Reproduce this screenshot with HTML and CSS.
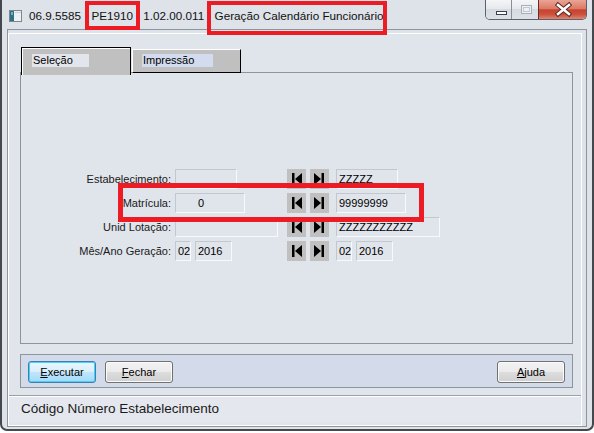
FILE: index.html
```html
<!DOCTYPE html>
<html lang="pt-BR">
<head>
    <meta charset="UTF-8">
    <meta name="viewport" content="width=device-width, initial-scale=1.0">
    <title>Geração Calendário Funcionário</title>
    <link rel="stylesheet" href="styles.css">
</head>
<body>
    <div class="window">
        <div class="titlebar">
            <svg class="app-icon" width="13" height="12" viewBox="0 0 13 12">
                <rect x="0.5" y="0.5" width="12" height="11" fill="#eef1f4" stroke="#7d8790"/>
                <rect x="1" y="1" width="4" height="10" fill="#2e7480"/>
                <rect x="2" y="2" width="2" height="3" fill="#6fb3bd"/>
                <rect x="6" y="2" width="6" height="1" fill="#c9d0d8"/>
            </svg>
            <span class="title">06.9.5585 · PE1910 · 1.02.00.011 · Geração Calendário Funcionário</span>
            <div class="controls">
                <span class="ctl ctl-min">
                    <svg width="26" height="19" viewBox="0 0 26 19"><rect x="10.5" y="11.5" width="10" height="3" fill="#fff" stroke="#37414f"/></svg>
                </span>
                <span class="ctl ctl-max">
                    <svg width="27" height="19" viewBox="0 0 27 19"><rect x="9.5" y="5.5" width="10" height="8" fill="#eef0f3" stroke="#a9afb8"/><rect x="11.5" y="7.5" width="6" height="4" fill="none" stroke="#c3c8cf"/></svg>
                </span>
                <span class="ctl ctl-close">
                    <svg width="46" height="19" viewBox="0 0 46 19"><path d="M19 5 L30 14 M30 5 L19 14" stroke="#5a2a22" stroke-width="4.5" stroke-linecap="square"/><path d="M19 5 L30 14 M30 5 L19 14" stroke="#fff" stroke-width="2.5" stroke-linecap="square"/></svg>
                </span>
            </div>
        </div>

        <div class="client">
            <div class="form">
                <div class="form-body">
                    <div class="tabs">
                        <div class="tab tab-active"><span class="tab-label">Seleção</span></div>
                        <div class="tab"><span class="tab-label tab-label-alt">Impressão</span></div>
                    </div>

                    <div class="tab-panel">
                        <div class="fields">
                            <div class="field-row">
                                <span class="field-label">Estabelecimento:</span>
                                <div class="range-from"><span class="input w-62"></span></div>
                                <span class="nav-btn">
                                    <svg width="19" height="20" viewBox="0 0 19 20"><rect x="5" y="4" width="2.5" height="12"/><polygon points="8,10 15,4 15,16"/></svg>
                                </span>
                                <span class="nav-btn">
                                    <svg width="19" height="20" viewBox="0 0 19 20"><polygon points="4,4 11,10 4,16"/><rect x="11.5" y="4" width="2.5" height="12"/></svg>
                                </span>
                                <div class="range-to"><span class="input w-62">ZZZZZ</span></div>
                            </div>
                            <div class="field-row">
                                <span class="field-label">Matrícula:</span>
                                <div class="range-from"><span class="input input-num w-70">0</span></div>
                                <span class="nav-btn">
                                    <svg width="19" height="20" viewBox="0 0 19 20"><rect x="5" y="4" width="2.5" height="12"/><polygon points="8,10 15,4 15,16"/></svg>
                                </span>
                                <span class="nav-btn">
                                    <svg width="19" height="20" viewBox="0 0 19 20"><polygon points="4,4 11,10 4,16"/><rect x="11.5" y="4" width="2.5" height="12"/></svg>
                                </span>
                                <div class="range-to"><span class="input w-70">99999999</span></div>
                            </div>
                            <div class="field-row">
                                <span class="field-label">Unid Lotação:</span>
                                <div class="range-from"><span class="input w-103"></span></div>
                                <span class="nav-btn">
                                    <svg width="19" height="20" viewBox="0 0 19 20"><rect x="5" y="4" width="2.5" height="12"/><polygon points="8,10 15,4 15,16"/></svg>
                                </span>
                                <span class="nav-btn">
                                    <svg width="19" height="20" viewBox="0 0 19 20"><polygon points="4,4 11,10 4,16"/><rect x="11.5" y="4" width="2.5" height="12"/></svg>
                                </span>
                                <div class="range-to"><span class="input w-104">ZZZZZZZZZZZ</span></div>
                            </div>
                            <div class="field-row">
                                <span class="field-label">Mês/Ano Geração:</span>
                                <div class="range-from">
                                    <span class="input w-16">02</span>
                                    <span class="input w-37">2016</span>
                                </div>
                                <span class="nav-btn">
                                    <svg width="19" height="20" viewBox="0 0 19 20"><rect x="5" y="4" width="2.5" height="12"/><polygon points="8,10 15,4 15,16"/></svg>
                                </span>
                                <span class="nav-btn">
                                    <svg width="19" height="20" viewBox="0 0 19 20"><polygon points="4,4 11,10 4,16"/><rect x="11.5" y="4" width="2.5" height="12"/></svg>
                                </span>
                                <div class="range-to">
                                    <span class="input w-16">02</span>
                                    <span class="input w-37">2016</span>
                                </div>
                            </div>
                        </div>
                    </div>

                    <div class="button-bar">
                        <button class="btn btn-default"><u>E</u>xecutar</button>
                        <button class="btn"><u>F</u>echar</button>
                        <button class="btn btn-right"><u>A</u>juda</button>
                    </div>
                </div>

                <div class="status">
                    <div class="status-text">Código Número Estabelecimento</div>
                </div>
            </div>
        </div>
    </div>

    <!-- highlight marks drawn over the screenshot -->
    <div class="mark mark-code"></div>
    <div class="mark mark-title"></div>
    <div class="mark mark-row"></div>
</body>
</html>
```

FILE: styles.css
```css
/* Base */
* {
    box-sizing: border-box;
}

body {
    margin: 0;
    background: #ffffff;
    font-family: "Liberation Sans", Arial, sans-serif;
    font-size: 11px;
    color: #000000;
}

/* Window frame */
.window {
    width: 594px;
    height: 431px;
    background: #dee2e9;
    border: 2px solid #45484d;
    border-top: 0;
    border-radius: 0 0 7px 7px;
    padding: 0 5px 2px;
    display: flex;
    flex-direction: column;
}

.titlebar {
    height: 29px;
    display: flex;
    align-items: center;
    padding-left: 2px;
}

.app-icon {
    flex-shrink: 0;
    margin-top: 2px;
}

.title {
    margin-left: 7px;
    margin-top: 1px;
    font-size: 11.7px;
    color: #111111;
    white-space: nowrap;
}

.controls {
    margin-left: auto;
    align-self: flex-start;
    display: flex;
    height: 20px;
    border: 1px solid #5d626a;
    border-top: 0;
    border-radius: 0 0 5px 5px;
    overflow: hidden;
}

.ctl {
    display: block;
    height: 19px;
    background: linear-gradient(#f4f5f7, #e6e9ee 45%, #d6dae1 50%, #dde1e7);
}

.ctl-min {
    width: 26px;
    border-right: 1px solid #8a8f97;
}

.ctl-max {
    width: 27px;
    border-right: 1px solid #6a2c22;
}

.ctl-close {
    width: 47px;
    background: linear-gradient(#e9a595, #dc7a66 45%, #c7432e 52%, #cc503b 75%, #df8674);
}

.ctl svg {
    display: block;
}

/* Client area */
.client {
    flex: 1;
    border: 1px solid #8f949b;
    padding: 3px 4px 0 0;
    display: flex;
    flex-direction: column;
}

.form {
    flex: 1;
    border: 1px solid #ffffff;
    background: #e0e4eb;
    display: flex;
    flex-direction: column;
}

.form-body {
    padding: 13px 8px 0 11px;
}

/* Tabs */
.tabs {
    display: flex;
    align-items: flex-start;
    height: 25px;
}

.tab {
    position: relative;
    z-index: 1;
    width: 109px;
    height: 24px;
    margin-top: 2px;
    margin-left: 1px;
    padding: 4px 0 0 9px;
    background: #c0c0c0;
    border-top: 1px solid #ffffff;
    border-left: 1px solid #ffffff;
    border-right: 1px solid #000000;
    border-bottom: 1px solid #000000;
}

.tab-active {
    width: 110px;
    height: 28px;
    margin-top: 0;
    padding: 6px 0 0 10px;
    border-top-color: #000000;
    border-left-color: #000000;
    border-bottom: 0;
    box-shadow: inset 1px 1px 0 #ffffff;
}

.tab-label {
    display: inline-block;
    width: 57px;
    height: 13px;
    line-height: 13px;
    padding-left: 1px;
    background: #e2e5ec;
}

.tab-label-alt {
    width: 71px;
    background: #d3dbee;
}

.tab-panel {
    height: 272px;
    border: 1px solid #8f949b;
}

/* Field rows */
.fields {
    margin-top: 96px;
    display: flex;
    flex-direction: column;
    gap: 4px;
}

.field-row {
    display: flex;
    align-items: center;
    height: 20px;
}

.field-label {
    width: 150px;
    margin-right: 4px;
    text-align: right;
    color: #1a1a1a;
}

.range-from {
    width: 112px;
    display: flex;
    gap: 4px;
}

.range-to {
    margin-left: 7px;
    display: flex;
    gap: 4px;
}

.input {
    display: block;
    height: 20px;
    padding: 0 2px;
    line-height: 18px;
    white-space: nowrap;
    overflow: hidden;
    border: 1px solid;
    border-color: #c3c8d0 #f8f9fb #f8f9fb #c3c8d0;
}

.input-num {
    padding-left: 22px;
}

.w-16 { width: 16px; }
.w-37 { width: 37px; }
.w-62 { width: 62px; }
.w-70 { width: 70px; }
.w-103 { width: 103px; }
.w-104 { width: 104px; }

.nav-btn {
    display: block;
    width: 19px;
    height: 20px;
    background: #c0c0c0;
}

.nav-btn + .nav-btn {
    margin-left: 4px;
}

.nav-btn svg {
    display: block;
    fill: #000000;
}

/* Buttons */
.button-bar {
    margin-top: 10px;
    height: 34px;
    border: 1px solid #8f949b;
    background: #d3dbea;
    display: flex;
    align-items: flex-start;
    gap: 9px;
    padding: 6px 7px 0;
}

.btn {
    width: 68px;
    height: 22px;
    padding: 0;
    border: 1px solid #707070;
    border-radius: 3px;
    background: linear-gradient(#f2f2f2, #ebebeb 48%, #dddddd 52%, #cfcfcf);
    box-shadow: inset 0 0 0 1px #fbfbfb;
    font-family: "Liberation Sans", Arial, sans-serif;
    font-size: 11px;
    color: #000000;
}

.btn-default {
    border-color: #3c7fb1;
    background: linear-gradient(#eaf6fd, #d9f0fc 48%, #bee6fd 52%, #a7d9f5);
    box-shadow: inset 0 0 0 1px #48d0f8;
}

.btn-right {
    margin-left: auto;
}

/* Status bar */
.status {
    flex: 1;
    margin-top: 7px;
    border-top: 1px solid #9ca1a8;
    padding: 0 1px 3px 0;
}

.status-text {
    height: 26px;
    border-top: 1px solid #ffffff;
    background: #e4e7ed;
    padding-left: 12px;
    line-height: 24px;
    font-size: 13.5px;
    color: #1a1a1a;
}

/* Red highlight marks */
.mark {
    position: absolute;
    border: 4px solid #ed1c24;
}

.mark-code {
    left: 85px;
    top: 1px;
    width: 55px;
    height: 29px;
}

.mark-title {
    left: 207px;
    top: 1px;
    width: 180px;
    height: 34px;
}

.mark-row {
    left: 118px;
    top: 183px;
    width: 306px;
    height: 39px;
    border-width: 5px;
}
```
